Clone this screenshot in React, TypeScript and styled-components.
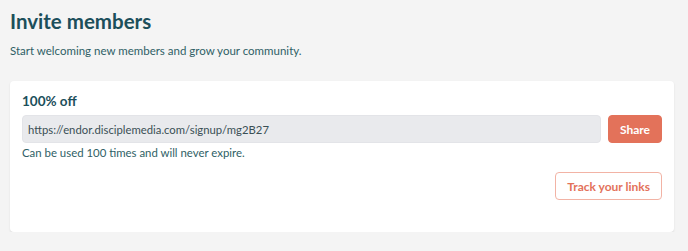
import React from "react";
import styled, { createGlobalStyle } from "styled-components";

const kTeal = "#1c4f5b";
const kTealText = "#2f5f66";
const kCoral = "#e3725a";

const GlobalStyle = createGlobalStyle`
  html, body {
    margin: 0;
    padding: 0;
    background: #f4f4f4;
    font-family: "Lato", "Open Sans", sans-serif;
  }
`;

const Page = styled.div`
  padding: 6px 14px 0 10px;
`;

const Title = styled.h1`
  margin: 0;
  font-size: 20.5px;
  line-height: 30px;
  font-weight: 700;
  color: ${kTeal};
`;

const Subtitle = styled.p`
  margin: 7px 0 0;
  font-size: 11.5px;
  line-height: 16px;
  color: ${kTealText};
`;

const Card = styled.div`
  margin-top: 22px;
  background: #fff;
  border-radius: 4px;
  box-shadow: 0 1px 2px rgba(0, 0, 0, 0.1);
  padding: 11px 12px 32px 12px;
`;

const Heading = styled.h2`
  margin: 0;
  font-size: 13.5px;
  line-height: 18px;
  font-weight: 700;
  color: ${kTeal};
`;

const LinkRow = styled.div`
  display: flex;
  gap: 7px;
  margin-top: 5px;
`;

const LinkInput = styled.input.attrs({ type: "text", readOnly: true })`
  flex: 1;
  height: 28px;
  box-sizing: border-box;
  border: 1px solid #e3e4e8;
  border-radius: 4px;
  background: #e9eaed;
  padding: 0 5px;
  font-family: inherit;
  font-size: 11.3px;
  color: #3a4f55;
  outline: none;
`;

const Button = styled.button<{ $outline?: boolean }>`
  height: 28px;
  box-sizing: border-box;
  border-radius: 4px;
  font-family: inherit;
  font-size: 12px;
  font-weight: 700;
  padding: 0 ${p => (p.$outline ? "11px" : "10px")};
  min-width: ${p => (p.$outline ? "105px" : "54px")};
  cursor: pointer;
  background: ${p => (p.$outline ? "#fff" : kCoral)};
  color: ${p => (p.$outline ? kCoral : "#fff")};
  border: 1px solid ${p => (p.$outline ? "#f2b3a5" : kCoral)};
`;

const Note = styled.p`
  margin: 2px 0 0;
  font-size: 11.4px;
  line-height: 15px;
  color: ${kTealText};
`;

const Actions = styled.div`
  display: flex;
  justify-content: flex-end;
  margin-top: 12px;
`;

export default function App() {
  return (
    <>
      <GlobalStyle />
      <Page>
        <Title>Invite members</Title>
        <Subtitle>Start welcoming new members and grow your community.</Subtitle>
        <Card>
          <Heading>100% off</Heading>
          <LinkRow>
            <LinkInput value="https://endor.disciplemedia.com/signup/mg2B27" />
            <Button>Share</Button>
          </LinkRow>
          <Note>Can be used 100 times and will never expire.</Note>
          <Actions>
            <Button $outline>Track your links</Button>
          </Actions>
        </Card>
      </Page>
    </>
  );
}
